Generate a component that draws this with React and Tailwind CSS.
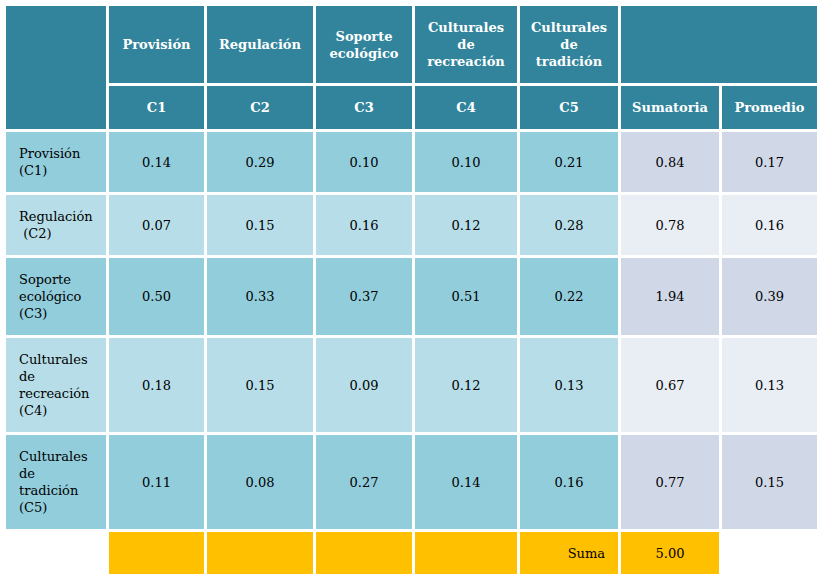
import React from 'react';

const rows = [
  { label: ['Provisión', '(C1)'], values: ['0.14', '0.29', '0.10', '0.10', '0.21'], sum: '0.84', avg: '0.17', tone: 'dark', h: 'h-[60px]' },
  { label: ['Regulación', '\u00a0(C2)'], values: ['0.07', '0.15', '0.16', '0.12', '0.28'], sum: '0.78', avg: '0.16', tone: 'light', h: 'h-[60px]' },
  { label: ['Soporte', 'ecológico', '(C3)'], values: ['0.50', '0.33', '0.37', '0.51', '0.22'], sum: '1.94', avg: '0.39', tone: 'dark', h: 'h-[77px]' },
  { label: ['Culturales', 'de', 'recreación', '(C4)'], values: ['0.18', '0.15', '0.09', '0.12', '0.13'], sum: '0.67', avg: '0.13', tone: 'light', h: 'h-[94px]' },
  { label: ['Culturales', 'de', 'tradición', '(C5)'], values: ['0.11', '0.08', '0.27', '0.14', '0.16'], sum: '0.77', avg: '0.15', tone: 'dark', h: 'h-[94px]' },
];

const headers = [
  ['Provisión'],
  ['Regulación'],
  ['Soporte', 'ecológico'],
  ['Culturales', 'de', 'recreación'],
  ['Culturales', 'de', 'tradición'],
];

const Lines = ({ lines }) => lines.map((l, i) => (
  <React.Fragment key={i}>
    {i > 0 && <br />}
    {l}
  </React.Fragment>
));

const App = () => {
  const head = 'bg-[#31849b] text-white font-bold flex items-center justify-center text-center';

  return (
    <div
      className="w-[823px] h-[579px] bg-white pt-[6px] pl-[6px] text-[13px] leading-[17px] text-black"
      style={{ fontFamily: '"DejaVu Serif", "Liberation Serif", serif' }}
    >
      <div className="grid grid-cols-[100px_95px_106px_96px_102px_98px_98px_95px] grid-rows-[77px_43px] gap-[3px]">
        <div className="bg-[#31849b] row-span-2" />
        {headers.map((h, i) => (
          <div key={i} className={head}>
            <div><Lines lines={h} /></div>
          </div>
        ))}
        <div className="bg-[#31849b] col-span-2" />
        {['C1', 'C2', 'C3', 'C4', 'C5', 'Sumatoria', 'Promedio'].map((c) => (
          <div key={c} className={head}>{c}</div>
        ))}
      </div>

      {rows.map((r, i) => {
        const main = r.tone === 'dark' ? 'bg-[#92cddc]' : 'bg-[#b7dee8]';
        const side = r.tone === 'dark' ? 'bg-[#d0d8e8]' : 'bg-[#e9edf4]';
        return (
          <div
            key={i}
            className={`grid grid-cols-[100px_95px_106px_96px_102px_98px_98px_95px] gap-[3px] mt-[3px] ${r.h}`}
          >
            <div className={`${main} flex items-center pl-[13px]`}>
              <div><Lines lines={r.label} /></div>
            </div>
            {r.values.map((v, j) => (
              <div key={j} className={`${main} flex items-center justify-center`}>{v}</div>
            ))}
            <div className={`${side} flex items-center justify-center`}>{r.sum}</div>
            <div className={`${side} flex items-center justify-center`}>{r.avg}</div>
          </div>
        );
      })}

      <div className="grid grid-cols-[100px_95px_106px_96px_102px_98px_98px_95px] gap-[3px] mt-[3px] h-[42px]">
        <div />
        <div className="bg-[#ffc000]" />
        <div className="bg-[#ffc000]" />
        <div className="bg-[#ffc000]" />
        <div className="bg-[#ffc000]" />
        <div className="bg-[#ffc000] flex items-center justify-end pr-[13px]">Suma</div>
        <div className="bg-[#ffc000] flex items-center justify-center">5.00</div>
        <div />
      </div>
    </div>
  );
};

export default App;
